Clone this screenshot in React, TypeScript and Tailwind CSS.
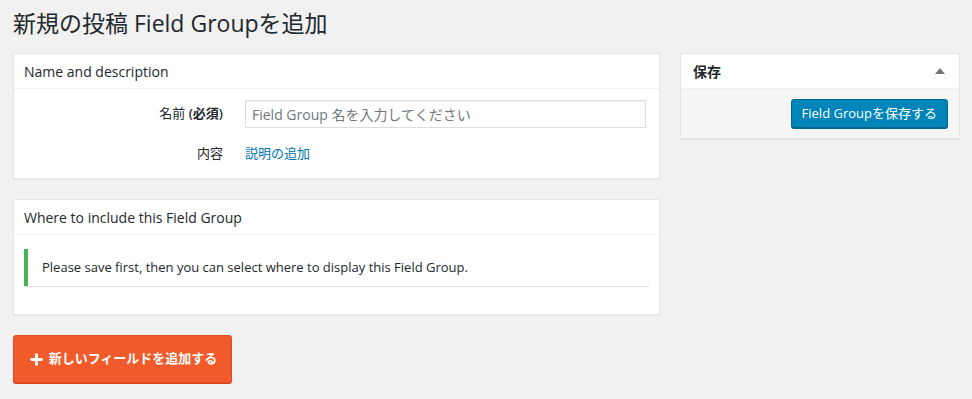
import { Plus } from "lucide-react"

const font = "font-['Open_Sans','Noto_Sans_CJK_JP',sans-serif]"

function Postbox({ title, children }: { title: string; children: React.ReactNode }) {
  return (
    <div className="border border-[#e5e5e5] bg-white shadow-[0_1px_1px_rgba(0,0,0,0.04)]">
      <div className="flex h-[35px] items-center border-b border-[#eeeeee] px-[10px] text-[14px] text-[#23282d]">
        {title}
      </div>
      {children}
    </div>
  )
}

export default function App() {
  return (
    <div className={`${font} min-h-[399px] bg-[#f1f1f1] pl-[13px] pr-[12px] text-[13px] text-[#444]`}>
      <h1 className="pt-[9px] pb-[15px] text-[23px] leading-[29px] font-normal text-[#23282d]">
        新規の投稿 Field Groupを追加
      </h1>

      <div className="flex items-start gap-[20px]">
        {/* Main column */}
        <div className="flex w-[647px] flex-col gap-[20px]">
          <Postbox title="Name and description">
            <div className="pt-[11px] pb-[10px]">
              <div className="flex items-center">
                <label className="w-[231px] pr-[22px] text-right text-[#23282d]">
                  名前 <b className="font-semibold">(必須)</b>
                </label>
                <input
                  className="h-[28px] w-[401px] border border-[#dddddd] px-[6px] text-[14px] text-[#32373c] placeholder:text-[#72777c] shadow-[inset_0_1px_2px_rgba(0,0,0,0.07)] outline-none"
                  placeholder="Field Group 名を入力してください"
                />
              </div>
              <div className="mt-[12px] flex h-[28px] items-center">
                <span className="w-[231px] pr-[22px] text-right text-[#23282d]">内容</span>
                <a className="text-[#0073aa]" href="#">説明の追加</a>
              </div>
            </div>
          </Postbox>

          <Postbox title="Where to include this Field Group">
            <div className="px-[10px] pt-[14px] pb-[28px]">
              <div className="flex h-[37px] items-center border-l-4 border-[#46b450] bg-white pl-[14px] text-[13px] text-[#23282d] shadow-[0_1px_1px_rgba(0,0,0,0.1)]">
                Please save first, then you can select where to display this Field Group.
              </div>
            </div>
          </Postbox>

          <div>
            <button className="flex h-[48px] w-[219px] items-center justify-center gap-[4px] rounded-[3px] border border-[#e14d1f] bg-[#f15a2b] text-[13px] font-bold text-white shadow-[0_1px_0_#d4441a]">
              <Plus className="h-[17px] w-[17px]" strokeWidth={4} />
              新しいフィールドを追加する
            </button>
          </div>
        </div>

        {/* Sidebar */}
        <div className="w-[280px] border border-[#e5e5e5] bg-white shadow-[0_1px_1px_rgba(0,0,0,0.04)]">
          <div className="flex h-[35px] items-center justify-between border-b border-[#eeeeee] pl-[12px] pr-[14px] text-[14px] font-bold text-[#23282d]">
            保存
            <svg width="10" height="6" viewBox="0 0 10 6">
              <path d="M5 0L10 6H0Z" fill="#72777c" />
            </svg>
          </div>
          <div className="flex justify-end bg-[#f5f5f5] px-[11px] pt-[10px] pb-[10px]">
            <button className="h-[29px] rounded-[3px] border border-[#006799] bg-[#0085ba] px-[10px] text-[13px] text-white shadow-[0_1px_0_#006799]">
              Field Groupを保存する
            </button>
          </div>
        </div>
      </div>
    </div>
  )
}
